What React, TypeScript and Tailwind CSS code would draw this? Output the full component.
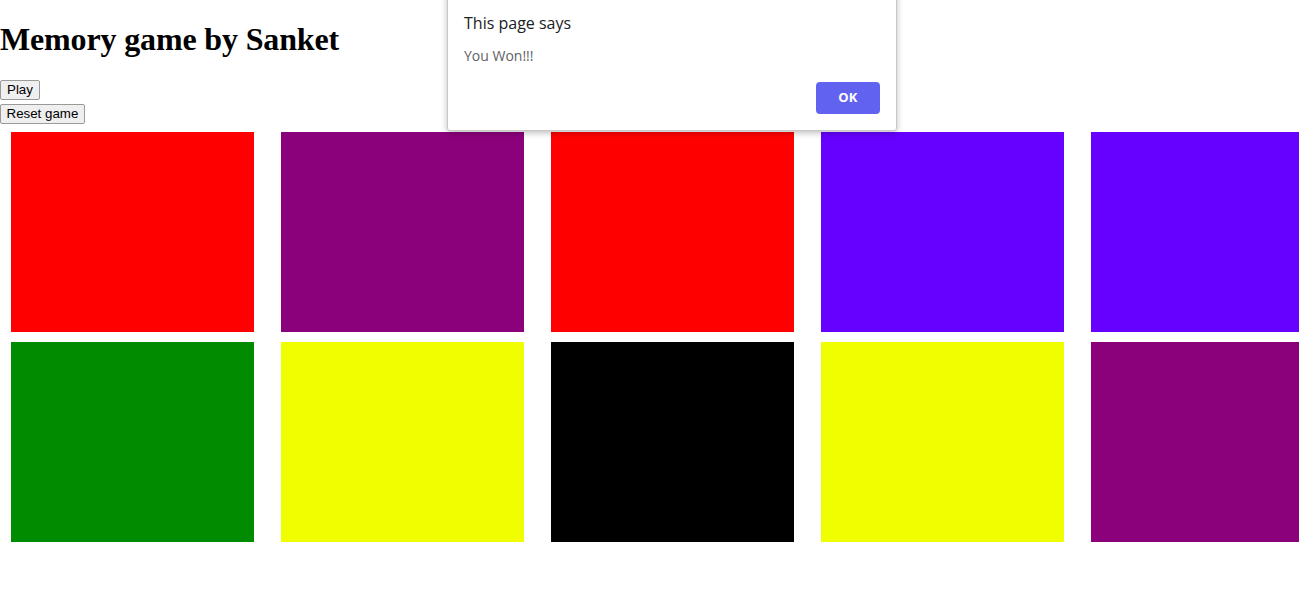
const cards = [
  '#ff0000', '#8b007b', '#ff0000', '#6600ff', '#6600ff',
  '#008b00', '#f0ff00', '#000000', '#f0ff00', '#8b007b',
];

export default function App() {
  return (
    <div className="relative w-[1299px] h-[616px] overflow-hidden bg-white text-black">
      <h1 className="my-[21.44px] text-[32px] leading-[37px] font-bold tracking-[-0.15px] font-['Liberation_Serif',serif]">
        Memory game by Sanket
      </h1>
      <div className="flex flex-col items-start gap-[4px] font-['Liberation_Sans',sans-serif] text-[13.33px]">
        <button className="h-[20px] px-[6px] leading-none bg-[#efefef] border border-[#9a9a9a] rounded-[2px]">Play</button>
        <button className="h-[20px] px-[5.5px] leading-none bg-[#efefef] border border-[#9a9a9a] rounded-[2px]">Reset game</button>
      </div>
      <div className="mt-[8px] pl-[11px] flex flex-wrap w-[1400px] gap-x-[27px] gap-y-[10px]">
        {cards.map((c, i) => (
          <div key={i} className="w-[243px] h-[200px] shrink-0" style={{ backgroundColor: c }} />
        ))}
      </div>

      {/* alert dialog */}
      <div className="absolute left-[447px] top-[-10px] w-[450px] h-[141px] bg-white border border-[#c8c8c8] rounded-b-[3px] shadow-[0_2px_6px_rgba(0,0,0,0.25)] font-['Open_Sans',sans-serif]">
        <div className="pl-[16px] pt-[21px] text-[16px] leading-[22px] text-[#202124]">This page says</div>
        <div className="pl-[16px] pt-[12px] text-[14px] leading-[20px] text-[#5f6368]">You Won!!!</div>
        <div className="flex justify-end pr-[16px] pt-[16px]">
          <button className="w-[64px] h-[32px] rounded-[4px] bg-[#6262f0] text-white text-[13px] font-bold tracking-wide">OK</button>
        </div>
      </div>
    </div>
  );
}
